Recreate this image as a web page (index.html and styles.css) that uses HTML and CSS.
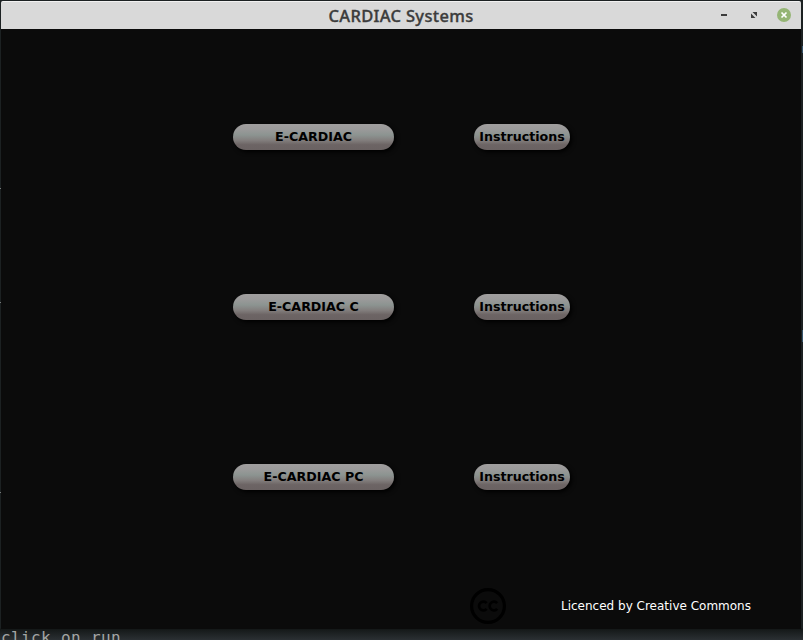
FILE: index.html
```html
<!DOCTYPE html>
<html lang="en">
<head>
<meta charset="utf-8">
<title>CARDIAC Systems</title>
<link rel="stylesheet" href="styles.css">
</head>
<body>
<div class="desktop">
  <i class="speck speck-a"></i><i class="speck speck-b"></i><i class="speck speck-c"></i>
  <i class="edge edge-a"></i><i class="edge edge-b"></i>
  <div class="terminal-text">click on run</div>
  <main class="window">
    <header class="titlebar">
      <h1 class="title">CARDIAC Systems</h1>
      <div class="controls">
        <svg width="14" height="14" viewBox="0 0 14 14"><path d="M4 6h6v2H4z" fill="#3c3c3c"/></svg>
        <svg width="14" height="14" viewBox="0 0 14 14"><path d="M5.5 4H10v4.5zM4 5.5V10h4.5z" fill="#3c3c3c"/></svg>
        <svg width="14" height="14" viewBox="0 0 14 14"><circle cx="7" cy="7" r="7" fill="#95b575"/><path d="M4.5 4.5l5 5M9.5 4.5l-5 5" stroke="#fff" stroke-width="1.7"/></svg>
      </div>
    </header>
    <section class="content">
      <div class="menu">
        <button class="btn">E-CARDIAC</button><button class="btn">Instructions</button>
        <button class="btn">E-CARDIAC C</button><button class="btn">Instructions</button>
        <button class="btn">E-CARDIAC PC</button><button class="btn">Instructions</button>
      </div>
      <footer class="license">
        <svg width="36" height="36" viewBox="0 0 36 36" fill="none" stroke="#000">
          <circle cx="18" cy="18" r="16.4" stroke-width="3.2"/>
          <path d="M16.6 15.2a4.3 4.3 0 1 0 0 5.6M27.2 15.2a4.3 4.3 0 1 0 0 5.6" stroke-width="2.7"/>
        </svg>
        <span class="license-text">Licenced by Creative Commons</span>
      </footer>
    </section>
  </main>
</div>
</body>
</html>
```

FILE: styles.css
```css
* { box-sizing: border-box; }
body { margin: 0; }
.desktop {
  position: relative;
  width: 803px;
  height: 640px;
  padding: 1px 2px 0 1px;
  overflow: hidden;
  background: linear-gradient(#1c2122 0 628px, #141818 629px, #2b3033 640px);
}
.window { width: 800px; height: 628px; display: flex; flex-direction: column; }
.titlebar {
  height: 28px;
  display: grid;
  grid-template-columns: 90px 1fr 90px;
  align-items: center;
  background: #d9d9d9;
  border-top: 1px solid #f1f1f1;
  border-radius: 2px 2px 0 0;
}
.title {
  grid-column: 2;
  margin: 0;
  text-align: center;
  font: 500 16.5px/27px "Noto Sans", sans-serif;
  letter-spacing: 0.33px;
  -webkit-text-stroke: 0.35px #3c3c3c;
  color: #3c3c3c;
  white-space: nowrap;
}
.controls { display: flex; gap: 16px; justify-content: flex-end; padding: 0 10px 2px 0; }
.content { flex: 1; display: flex; flex-direction: column; background: #0b0b0b; }
.menu {
  display: grid;
  grid-template-columns: 161px 96px;
  grid-auto-rows: 26px;
  column-gap: 80px;
  row-gap: 144px;
  padding: 95px 0 0 232px;
}
.btn {
  padding: 0;
  border: 0;
  border-radius: 13px;
  background: linear-gradient(#a09e9e 0%, #9b9a9a 20%, #8c9491 42%, #837f7e 62%, #6c6464 80%, #6a6262 100%);
  box-shadow: 2px 2px 4px #000;
  color: #000;
  font: bold 12.65px/26px "DejaVu Sans", sans-serif;
  white-space: nowrap;
}
.license { display: flex; align-items: center; gap: 55px; margin: auto 0 5px 469px; }
.license-text { color: #fff; font: 12px/16px "DejaVu Sans", sans-serif; white-space: nowrap; }
.terminal-text {
  position: absolute;
  left: 1px;
  top: 629px;
  font: 16px/18px "DejaVu Sans Mono", monospace;
  letter-spacing: 0.37px;
  color: #a3a5a4;
}
.speck { position: absolute; left: 0; width: 1px; height: 1px; background: #777b7b; }
.speck-a { top: 188px; }
.speck-b { top: 302px; }
.speck-c { top: 492px; }
.edge { position: absolute; left: 802px; width: 1px; background: #35536b; }
.edge-a { top: 46px; height: 7px; }
.edge-b { top: 330px; height: 12px; }
```
